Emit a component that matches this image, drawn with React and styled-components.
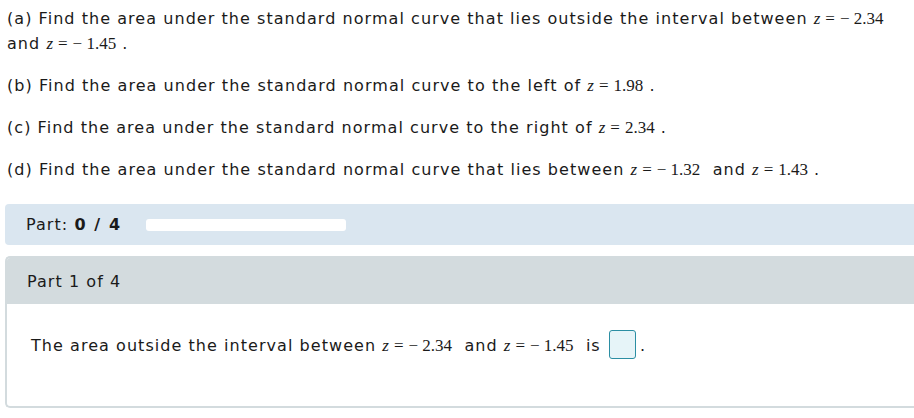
import React from 'react';
import styled, { createGlobalStyle } from 'styled-components';

const GlobalStyle = createGlobalStyle`
    body {
        margin: 0;
        background: #ffffff;
        overflow: hidden;
        font-family: Verdana, "DejaVu Sans", sans-serif;
        color: #1a1a1a;
    }
`;

function Z({ value }) {
    return (
        <Math>
            <Var>z</Var>
            <Op>=</Op>
            {value}
        </Math>
    );
}

function App() {
    return (
        <Page>
            <GlobalStyle />
            <Questions>
                <Question>
                    (a) Find the area under the standard normal curve that lies outside the interval between <Z value="− 2.34" />
                    <br />
                    and <Z value="− 1.45" /> .
                </Question>
                <Question>
                    (b) Find the area under the standard normal curve to the left of <Z value="1.98" /> .
                </Question>
                <Question>
                    (c) Find the area under the standard normal curve to the right of <Z value="2.34" /> .
                </Question>
                <Question>
                    (d) Find the area under the standard normal curve that lies between <Z value="− 1.32" />{'  '}and <Z value="1.43" /> .
                </Question>
            </Questions>

            <ProgressBar>
                <ProgressLabel>
                    Part: <strong>0 / 4</strong>
                </ProgressLabel>
                <Track />
            </ProgressBar>

            <PartCard>
                <PartHeader>Part 1 of 4</PartHeader>
                <PartBody>
                    The area outside the interval between <Z value="− 2.34" />{'  '}and <Z value="− 1.45" />{'  '}is <AnswerBox />.
                </PartBody>
            </PartCard>
        </Page>
    );
}

export default App;

const Page = styled.div`
    padding: 6px 0 0 5px;
    width: 940px;
    letter-spacing: 1.05px;
`;

const Questions = styled.div`
    padding-left: 2px;
`;

const Question = styled.p`
    margin: 0 0 17px 0;
    font-size: 16px;
    line-height: 25px;
    white-space: pre-wrap;
`;

const Math = styled.span`
    font-family: "Liberation Serif", "Times New Roman", serif;
    font-size: 17px;
    letter-spacing: 0;
    white-space: nowrap;
`;

const Var = styled.i`
    font-style: italic;
`;

const Op = styled.span`
    margin: 0 5px 0 5px;
`;

const ProgressBar = styled.div`
    display: flex;
    align-items: center;
    gap: 24px;
    height: 41px;
    margin-top: 22px;
    padding-left: 21px;
    background: #dae6f0;
    border-radius: 4px;
`;

const ProgressLabel = styled.div`
    font-size: 16px;

    strong {
        font-weight: 700;
        letter-spacing: 1.6px;
    }
`;

const Track = styled.div`
    width: 200px;
    height: 12px;
    background: #ffffff;
    border-radius: 3px;
`;

const PartCard = styled.div`
    margin-top: 11px;
    border: 2px solid #d3dbde;
    border-right: none;
    border-radius: 5px 0 0 5px;
    overflow: hidden;
`;

const PartHeader = styled.div`
    display: flex;
    align-items: center;
    height: 46px;
    padding-left: 20px;
    background: #d3dbde;
    font-size: 16px;
`;

const PartBody = styled.div`
    height: 102px;
    padding: 29px 0 0 24px;
    box-sizing: border-box;
    font-size: 16px;
    line-height: 25px;
    white-space: pre;
`;

const AnswerBox = styled.span`
    display: inline-block;
    vertical-align: middle;
    width: 25px;
    height: 27px;
    margin: -4px 4px 0 2px;
    background: #e6f4f8;
    border: 1.5px solid #2b8ea3;
    border-radius: 3px;
`;
